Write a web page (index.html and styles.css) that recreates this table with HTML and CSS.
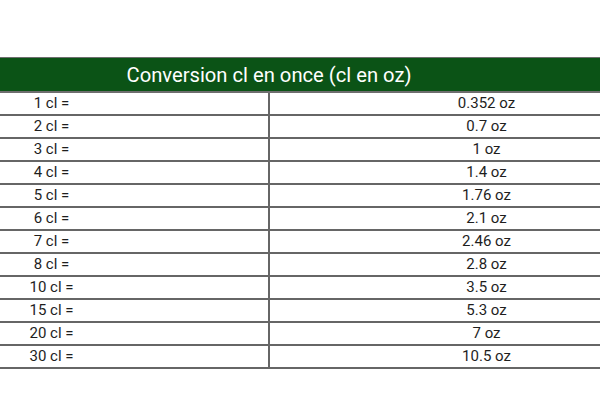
FILE: index.html
```html
<!DOCTYPE html>
<html lang="fr">
<head>
<meta charset="utf-8">
<title>Conversion cl en once</title>
<link rel="stylesheet" href="styles.css">
</head>
<body>
<div class="page">
<table class="conv">
<thead>
<tr><th colspan="2">Conversion cl en once (cl en oz)</th></tr>
</thead>
<tbody>
<tr><td>1 cl =</td><td>0.352 oz</td></tr>
<tr><td>2 cl =</td><td>0.7 oz</td></tr>
<tr><td>3 cl =</td><td>1 oz</td></tr>
<tr><td>4 cl =</td><td>1.4 oz</td></tr>
<tr><td>5 cl =</td><td>1.76 oz</td></tr>
<tr><td>6 cl =</td><td>2.1 oz</td></tr>
<tr><td>7 cl =</td><td>2.46 oz</td></tr>
<tr><td>8 cl =</td><td>2.8 oz</td></tr>
<tr><td>10 cl =</td><td>3.5 oz</td></tr>
<tr><td>15 cl =</td><td>5.3 oz</td></tr>
<tr><td>20 cl =</td><td>7 oz</td></tr>
<tr><td>30 cl =</td><td>10.5 oz</td></tr>
</tbody>
</table>
</div>
</body>
</html>
```

FILE: styles.css
```css
html, body {
  margin: 0;
  padding: 0;
  background: #ffffff;
  overflow: hidden;
}
.page {
  padding-top: 57px;
  width: 600px;
  overflow: hidden;
}
.conv {
  border-collapse: collapse;
  width: 872px;
  margin-left: -167px;
  font-family: Roboto, "Liberation Sans", sans-serif;
  color: #1e1e1e;
  table-layout: fixed;
}
.conv th {
  background: #0b5316;
  color: #ffffff;
  font-weight: 400;
  font-size: 20.2px;
  height: 31px;
  padding: 2px 0 0 0;
  text-align: center;
  border: 2px solid #6e6e6e;
  border-top-width: 1px;
  line-height: 31px;
}
.conv td {
  width: 50%;
  height: 21px;
  padding: 0;
  font-size: 15px;
  line-height: 21px;
  text-align: center;
  border: 2px solid #666666;
}
```
